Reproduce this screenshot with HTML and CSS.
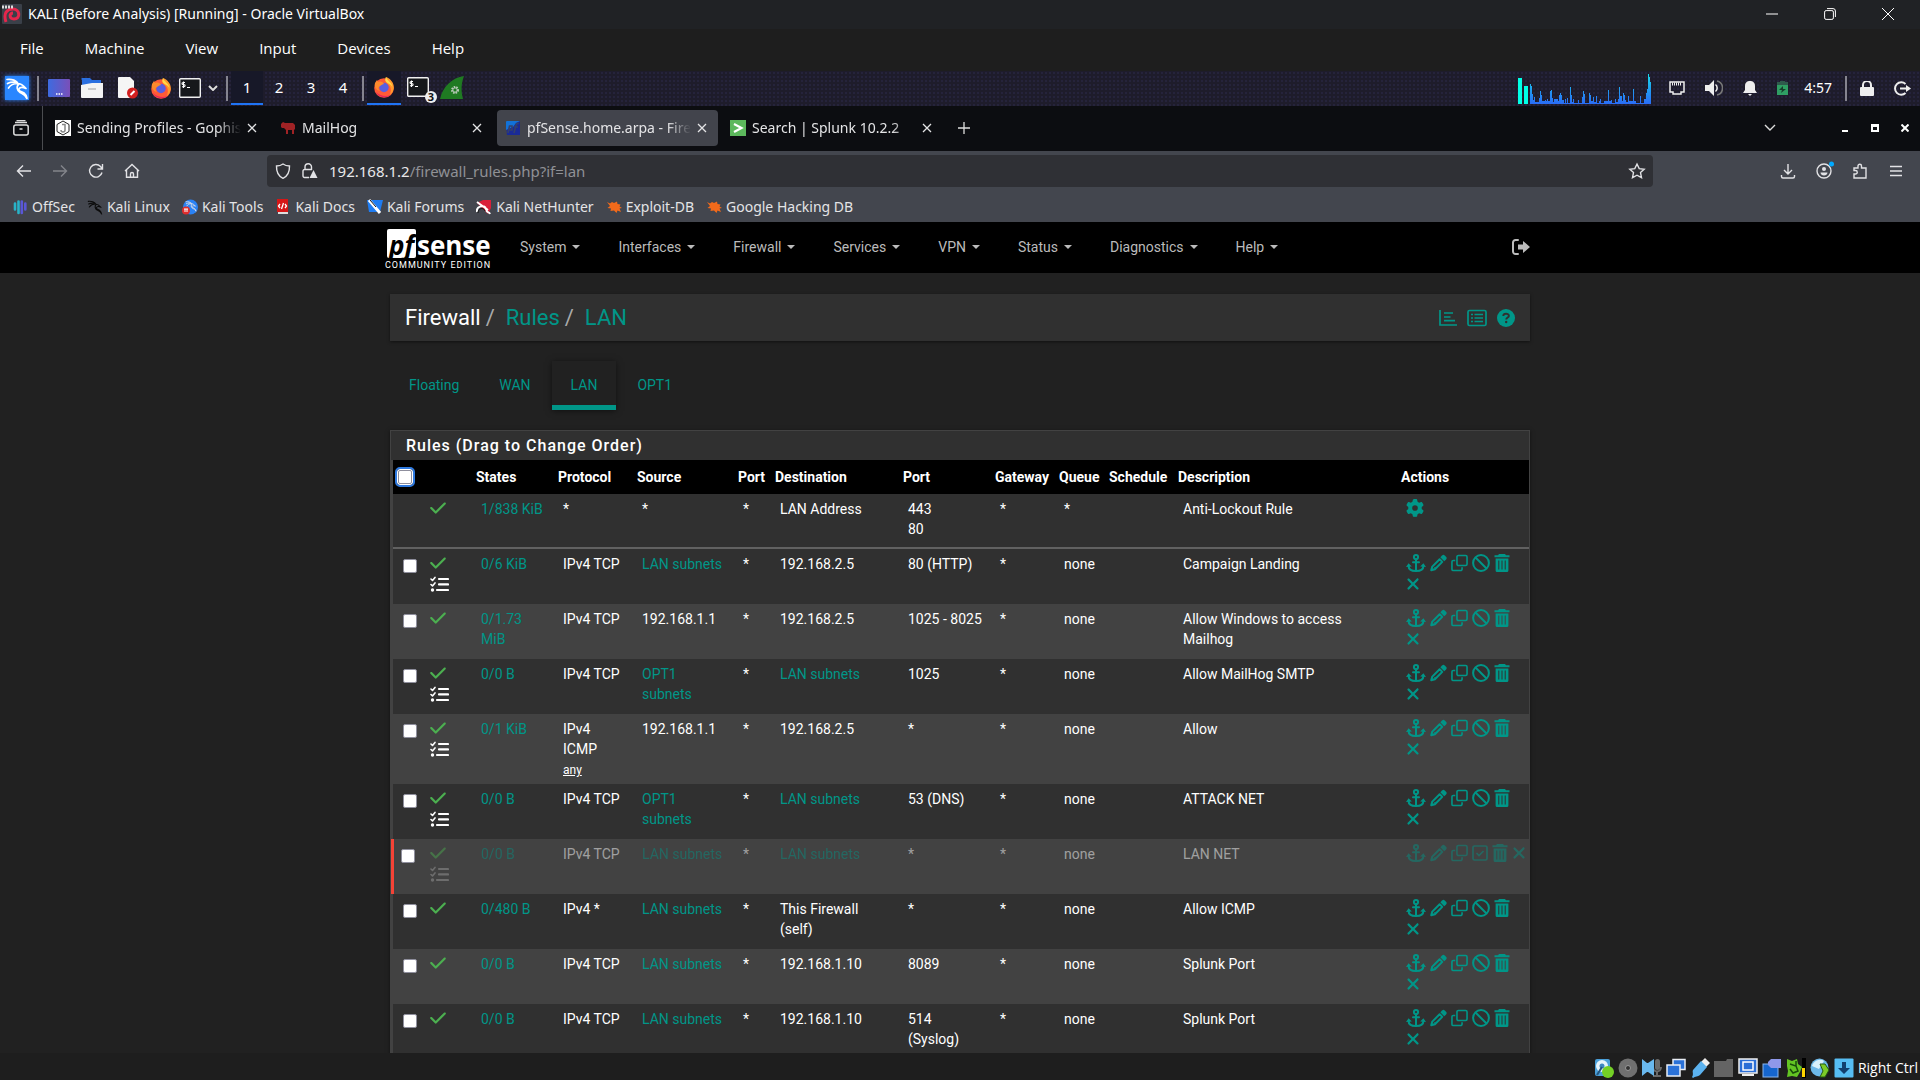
FILE: index.html
```html
<!DOCTYPE html>
<html lang="en">
<head>
<meta charset="utf-8">
<title>pfSense.home.arpa - Firewall: Rules: LAN</title>
<link rel="stylesheet" href="styles.css">
</head>
<body>
<svg class="sprite" aria-hidden="true">
  <symbol id="check" viewBox="0 0 448 512"><path fill="currentColor" d="M438.6 105.4c12.5 12.5 12.5 32.8 0 45.3l-256 256c-12.5 12.5-32.8 12.5-45.3 0l-128-128c-12.5-12.5-12.5-32.8 0-45.3s32.8-12.5 45.3 0L160 338.7 393.4 105.4c12.5-12.5 32.8-12.5 45.3 0z"/></symbol>
  <symbol id="xmark" viewBox="0 0 384 512"><path fill="currentColor" d="M342.6 150.6c12.5-12.5 12.5-32.8 0-45.3s-32.8-12.5-45.3 0L192 210.7 86.6 105.4c-12.5-12.5-32.8-12.5-45.3 0s-12.5 32.8 0 45.3L146.7 256 41.4 361.4c-12.5 12.5-12.5 32.8 0 45.3s32.8 12.5 45.3 0L192 301.3 297.4 406.6c12.5 12.5 32.8 12.5 45.3 0s12.5-32.8 0-45.3L237.3 256 342.6 150.6z"/></symbol>
  <symbol id="gear" viewBox="0 0 512 512"><path fill="currentColor" d="M495.9 166.6c3.2 8.7 .5 18.4-6.4 24.6l-43.3 39.4c1.1 8.3 1.7 16.8 1.7 25.4s-.6 17.1-1.7 25.4l43.3 39.4c6.9 6.2 9.6 15.9 6.4 24.6c-4.4 11.9-9.7 23.3-15.8 34.3l-4.7 8.1c-6.6 11-14 21.4-22.1 31.2c-5.9 7.2-15.7 9.6-24.5 6.8l-55.7-17.7c-13.4 10.3-28.2 18.9-44 25.4l-12.5 57.1c-2 9.1-9 16.3-18.2 17.8c-13.8 2.3-28 3.5-42.5 3.5s-28.7-1.2-42.5-3.5c-9.2-1.5-16.2-8.7-18.2-17.8l-12.5-57.1c-15.8-6.5-30.6-15.1-44-25.4L83.1 425.9c-8.8 2.8-18.6 .3-24.5-6.8c-8.1-9.8-15.5-20.2-22.1-31.2l-4.7-8.1c-6.1-11-11.4-22.4-15.8-34.3c-3.2-8.7-.5-18.4 6.4-24.6l43.3-39.4C64.6 273.1 64 264.6 64 256s.6-17.1 1.7-25.4L22.4 191.2c-6.9-6.2-9.6-15.9-6.4-24.6c4.4-11.9 9.7-23.3 15.8-34.3l4.7-8.1c6.6-11 14-21.4 22.1-31.2c5.9-7.2 15.7-9.6 24.5-6.8l55.7 17.7c13.4-10.3 28.2-18.9 44-25.4l12.5-57.1c2-9.1 9-16.3 18.2-17.8C227.3 1.2 241.5 0 256 0s28.7 1.2 42.5 3.5c9.2 1.5 16.2 8.7 18.2 17.8l12.5 57.1c15.8 6.5 30.6 15.1 44 25.4l55.7-17.7c8.8-2.8 18.6-.3 24.5 6.8c8.1 9.8 15.5 20.2 22.1 31.2l4.7 8.1c6.1 11 11.4 22.4 15.8 34.3zM256 336a80 80 0 1 0 0-160 80 80 0 1 0 0 160z"/></symbol>
  <symbol id="tasks" viewBox="0 0 19 18"><g fill="none" stroke="currentColor" stroke-linecap="round" stroke-linejoin="round"><path stroke-width="1.6" d="M1 4l1.5 1.4L5 2.4M1 9.5l1.5 1.4L5 7.9"/><path stroke-width="2.2" d="M9 4h9M9 9.4h9M7 15h11"/></g><circle cx="2.5" cy="15" r="1.7" fill="currentColor"/></symbol>
  <symbol id="anchor" viewBox="0 0 20 18"><g fill="none" stroke="currentColor" stroke-width="2" stroke-linecap="round"><circle cx="10" cy="3.1" r="2.1"/><path d="M10 5.5V16.5M7 8.2h6M2.6 12c0 3.4 3 5 7.4 5s7.4-1.6 7.4-5"/></g><path fill="currentColor" d="M0 12.9l2.6-3.7 3.2 3.4zM20 12.9l-2.6-3.7-3.2 3.4z"/></symbol>
  <symbol id="pencil" viewBox="0 0 18 18"><path fill="currentColor" d="M12.8 1a2 2 0 0 1 2.8 0L17 2.4a2 2 0 0 1 0 2.8l-1.9 1.9L10.9 2.9z"/><path fill="none" stroke="currentColor" stroke-width="2.1" stroke-linejoin="round" d="M10.2 5l2.8 2.8-7.8 7.8-3.9 1.1 1.1-3.9z"/><path stroke="currentColor" d="M4 14.5l2-1"/></symbol>
  <symbol id="clone" viewBox="0 0 18 18"><g fill="none" stroke="currentColor" stroke-width="1.7"><rect x="6.3" y="1" width="10.7" height="10.7" rx="1.6"/><path d="M4.5 6.3H2.5A1.5 1.5 0 0 0 1 7.8V15.5A1.5 1.5 0 0 0 2.5 17H10.2a1.5 1.5 0 0 0 1.5-1.5V13.5"/></g></symbol>
  <symbol id="ban" viewBox="0 0 18 18"><g fill="none" stroke="currentColor" stroke-width="2"><circle cx="9" cy="9" r="7.9"/><path d="M3.5 3.5l11 11"/></g></symbol>
  <symbol id="trash" viewBox="0 0 16 18"><path fill="currentColor" fill-rule="evenodd" d="M5 0h6l1 1.2h3.5v2H.5v-2H4zM1.600 4.500h12.800v12a1.500 1.500 0 0 1-1.500 1.500H3.100a1.500 1.500 0 0 1-1.500-1.500zM4.300 6.500v9h1v-9zM7.500 6.500v9h1v-9zM10.700 6.500v9h1v-9z"/></symbol>
  <symbol id="square-check" viewBox="0 0 16 18"><g fill="none" stroke="currentColor" stroke-width="1.7"><rect x="1" y="2" width="14" height="14" rx="1.5"/><path d="M4.500 9l2.500 2.500L11.500 7"/></g></symbol>
  <symbol id="close" viewBox="0 0 10 10"><path fill="none" stroke="currentColor" stroke-width="1.3" d="M1 1l8 8M9 1L1 9"/></symbol>
  <symbol id="firefox" viewBox="0 0 22 22"><circle cx="11" cy="12" r="9.8" fill="#ff5a36"/><path fill="#ff9a2b" d="M13 1c5 2 8 6 7.800 11a10 10 0 0 1-4 7c2-5 1-8-1-10s-4-4-2.800-8z"/><path fill="#ffd84a" d="M13 1c1 4 6 5 6.500 10-2-3-3-3-5-4S11.500 4 13 1z"/><circle cx="11" cy="11.5" r="4.7" fill="#5a5fe0"/><path fill="#ff8a2c" d="M2 7l2-3 1 2c3-1 5 0 6 2-2 0-2 1-4 2s-2 3 0 5c-4-1-6-4-5-8z"/><path fill="#e8255c" d="M2.500 16a10 10 0 0 0 15 3c-5 2-10 1-15-3z"/></symbol>
  <symbol id="terminal" viewBox="0 0 22 20"><rect x=".7" y=".7" width="20.6" height="18.6" rx="1" fill="#16181b" stroke="#f0f0f0" stroke-width="1.4"/><path fill="none" stroke="#fff" stroke-width="1.1" d="M6 4.500H4a1 1 0 0 0 0 2h1a1 1 0 0 1 0 2.200H3M4.500 3.500v6.500M8 9.500h3"/></symbol>
  <symbol id="dragon" viewBox="0 0 24 24"><path fill="none" stroke="currentColor" stroke-linecap="round" stroke-linejoin="round" stroke-width="1.7" d="M2 3.500c5-.5 8 .5 10.500 3M2.500 7.500c4-2 7-1.500 10-1 M3.500 12c2-3 5-4.500 9-4.500 4 0 6 2 8.500 5-3-1.500-6-1.500-7 .5s3 2.500 5 4 2.500 3 3 5.500c-2-4-4-4.500-7-6S11 10 14 8"/></symbol>
  <symbol id="spider" viewBox="0 0 16 16"><path fill="#f26a1b" d="M1 3l3 1.500L6 3l2 1 3-1.500L11.500 5l3 .5-1 2L16 9l-2.500.5L15 13l-3.500-1.500L10.500 14 8 11.500 4.500 12 5 9.500 1.500 9 4 7z"/></symbol>
</svg>

<header class="titlebar">
  <svg class="titlebar-logo" viewBox="0 0 20 20"><rect width="20" height="20" rx="1" fill="#3a4049"/><path fill="none" stroke="#e5264b" stroke-width="3" d="M4 18C1 9 5 5 11 5c7 0 8 10 1 10-5 0-5-6-1-6"/><path stroke="#ddd" stroke-width="3" stroke-dasharray="2 1" d="M0 3h11"/></svg>
  <span class="titlebar-text">KALI (Before Analysis) [Running] - Oracle VirtualBox</span>
  <div class="window-controls">
    <button aria-label="Minimize"><svg viewBox="0 0 12 12"><path d="M0 6h12"/></svg></button>
    <button aria-label="Restore"><svg viewBox="0 0 12 12"><rect x=".6" y="2.6" width="8.8" height="8.8" rx="1.5"/><path d="M3 .6h6a2.400 2.400 0 0 1 2.400 2.400v6"/></svg></button>
    <button aria-label="Close"><svg viewBox="0 0 12 12"><path d="M0 0l12 12M12 0L0 12"/></svg></button>
  </div>
</header>

<nav class="vm-menu" aria-label="Machine menu">
  <button>File</button><button>Machine</button><button>View</button><button>Input</button><button>Devices</button><button>Help</button>
</nav>

<section class="panel-bar" aria-label="Desktop panel">
  <button class="kali-button" aria-label="Applications"><svg viewBox="0 0 24 24"><use href="#dragon"/></svg></button>
  <span class="divider"></span>
  <div class="launchers">
    <svg width="22" height="18" viewBox="0 0 22 18"><defs><linearGradient id="desk"><stop stop-color="#3d6be0"/><stop offset="1" stop-color="#7a4fb8"/></linearGradient></defs><rect width="22" height="18" rx="1" fill="url(#desk)"/><path stroke="#fff" stroke-width="1.5" stroke-dasharray="1.5 1" d="M8 15h7"/></svg>
    <svg width="22" height="20" viewBox="0 0 22 20"><path fill="#2a6fe0" d="M1 2a1 1 0 0 1 1-2h7l2 2h9v6H1z"/><path fill="#f3f3f3" d="M0 7l11-2h11v14a1 1 0 0 1-1 1H1a1 1 0 0 1-1-1z"/><path stroke="#bbb" stroke-width="1.5" d="M7 11h8"/></svg>
    <svg class="editor" width="20" height="22" viewBox="0 0 20 22"><path fill="#f5f5f5" d="M0 1a1 1 0 0 1 1-1h11l4 4v16a1 1 0 0 1-1 1H1a1 1 0 0 1-1-1z"/><circle cx="14.5" cy="16" r="5.5" fill="#d21f1f"/><path stroke="#fff" stroke-width="2" d="M12.500 18l4-4"/></svg>
    <svg width="22" height="22"><use href="#firefox"/></svg>
    <svg class="shell" width="22" height="20"><use href="#terminal"/></svg>
  </div>
  <svg class="chevron" viewBox="0 0 10 6"><path d="M1 1l4 4 4-4"/></svg>
  <span class="divider"></span>
  <div class="workspaces">
    <button class="active">1</button><button>2</button><button>3</button><button>4</button>
  </div>
  <span class="divider"></span>
  <button class="task active" aria-label="Firefox"><svg width="22" height="22"><use href="#firefox"/></svg></button>
  <button class="task" aria-label="Terminals"><svg width="22" height="20"><use href="#terminal"/></svg><span class="badge">3</span></button>
  <button class="task" aria-label="Wireshark"><svg width="24" height="23" viewBox="0 0 24 23"><path fill="#1f7a22" d="M0 23C3 10 12 2 24 0c-3 8-3 15-1 23z"/><circle cx="15" cy="14" r="3" fill="none" stroke="#b9c9b9" stroke-width="2" stroke-dasharray="1.5 1"/><circle cx="15" cy="14" r="2.2" fill="none" stroke="#b9c9b9"/></svg></button>
  <div class="tray">
    <svg class="cpu-graph" width="141" height="31" viewBox="0 0 141 31"><defs><linearGradient id="cpu" gradientUnits="userSpaceOnUse" x1="0" y1="0" x2="0" y2="31"><stop stop-color="#18e0e8"/><stop offset=".6" stop-color="#2196f3"/><stop offset="1" stop-color="#2a6cf6"/></linearGradient></defs><path fill="#00ffe5" d="M0 5h4v26H0zM6 13h4v18H6z"/><path fill="url(#cpu)" d="M12 31V11h1v2h1v8h1v6h1v-3h1v5h4v-4h1v-7h1v4h1v6h3v-1h1v1h1v-2h1v2h2V18h1v-1h1v8h1v4h1v-3h4v2h1v-6h1v-2h1v2h1v5h2v3h1v-4h1v4h1v-5h1v5h2V14h1v8h1v7h1v-3h1v4h4v-3h1v3h3v-6h1v-6h1v3h1v9h4V20h1v2h1v6h2v-4h1v5h2v-6h1v7h2v-2h1v-2h1v4h3v-2h4V17h1v11h2v-1h1v3h3v-4h1v3h2v-3h1V14h1v9h2v5h1v-8h1v2h1v5h1v2h2v-6h1v5h4V16h1v12h2v2h4v-7h1v7h3v-4h2v-6h1v-4h1V1h1v3h1v5h1v22z"/></svg>
    <svg width="16" height="14" viewBox="0 0 16 14"><path fill="none" stroke="#eee" stroke-width="1.5" d="M1 1h14v10h-3v2H4v-2H1z"/><path stroke="#eee" stroke-dasharray="1 1" stroke-width="3" d="M3 3h10"/></svg>
    <svg width="18" height="16" viewBox="0 0 18 16"><path fill="#eee" d="M0 5h4l5-5v16l-5-5H0z"/><path fill="none" stroke="#eee" stroke-width="1.5" d="M10.500 4.500a4.500 4.500 0 0 1 0 7"/><path fill="none" stroke="#777" stroke-width="1.5" d="M12 1a7.200 7.200 0 0 1 0 14"/></svg>
    <svg width="14" height="16" viewBox="0 0 14 16"><path fill="#eee" d="M0 13l2-3V6a5 5 0 0 1 4-5h2a5 5 0 0 1 4 5v4l2 3zM5 14h4l-2 2z"/></svg>
    <svg width="12" height="14" viewBox="0 0 12 14"><path fill="#2f5a4c" d="M3 0h5v1h3v4H0V1h3z"/><path fill="#2f9e63" d="M0 4h11v10H0z"/><path fill="#173d2b" d="M6 5L2 9h3l-1 3 5-4H6z"/></svg>
    <span class="clock">4:57</span>
    <span class="divider"></span>
    <svg width="14" height="15" viewBox="0 0 14 15"><rect y="6" width="14" height="9" rx="1" fill="#eee"/><path fill="none" stroke="#eee" stroke-width="2" d="M3 7V4a4 4 0 0 1 8 0v3"/></svg>
    <svg width="17" height="15" viewBox="0 0 17 15"><path fill="none" stroke="#eee" stroke-width="2" d="M11.500 3a6.200 6.200 0 1 0 0 9M6 7.500h8"/><path fill="#eee" d="M12 4l5 3.500-5 3.500z"/></svg>
  </div>
</section>

<section class="tab-strip" aria-label="Browser tabs">
  <button class="view-button" aria-label="Firefox View"><svg viewBox="0 0 16 16"><rect x=".8" y="5" width="14.4" height="10" rx="2"/><path d="M2 2.500h12M3.500.6h9M6.500 9h3"/></svg></button>
  <div class="tabs">
    <div class="tab"><svg class="fav" viewBox="0 0 16 16"><rect width="16" height="16" fill="#fff"/><path fill="none" stroke="#222" d="M8 1l6 3.500v7L8 15l-6-3.500v-7z"/><path fill="none" stroke="#888" stroke-width="1.5" d="M7 4.500h3V10a2 2 0 0 1-4 0"/></svg><span class="tab-title">Sending Profiles - Gophish</span><button aria-label="Close tab"><svg><use href="#close"/></svg></button></div>
    <div class="tab"><svg class="fav" viewBox="0 0 16 16"><path fill="#a02225" d="M1 4l2-2 2 1h8l2 2v4l-1 1v4h-2v-4l-4 0v4H6v-4L4 8H2L1 7z"/></svg><span class="tab-title">MailHog</span><button aria-label="Close tab"><svg><use href="#close"/></svg></button></div>
    <div class="tab current"><svg class="fav" viewBox="0 0 16 16"><path fill="#1a2a96" d="M1 5l14-4v14H2z"/><path fill="#1272d8" d="M1 2a1 1 0 0 1 1-1h13l-4 2-3 4-7 3z"/><path fill="none" stroke="#34406c" stroke-width="1.6" d="M3 13l1.500-7h2.500v4H4.500M9 13l2-8q.5-2 3-1.500M9 7h4"/></svg><span class="tab-title">pfSense.home.arpa - Firewall</span><button aria-label="Close tab"><svg><use href="#close"/></svg></button></div>
    <div class="tab"><svg class="fav" viewBox="0 0 16 16"><rect width="16" height="16" fill="#5cb85c"/><path fill="none" stroke="#fff" stroke-width="2.2" d="M4 4l7.500 4L4 12"/></svg><span class="tab-title">Search | Splunk 10.2.2</span><button aria-label="Close tab"><svg><use href="#close"/></svg></button></div>
  </div>
  <button class="new-tab" aria-label="New tab"><svg viewBox="0 0 12 12"><path d="M6 0v12M0 6h12"/></svg></button>
  <div class="browser-controls">
    <svg class="list-tabs" viewBox="0 0 12 8"><path fill="none" stroke="#ddd" stroke-width="1.4" d="M1 1l5 5 5-5"/></svg>
    <button aria-label="Minimize"><svg viewBox="0 0 8 8"><path d="M1 7h6"/></svg></button>
    <button aria-label="Maximize"><svg viewBox="0 0 8 8"><path d="M1 1h6v6H1zM1 2h6"/></svg></button>
    <button aria-label="Close"><svg viewBox="0 0 8 8"><path d="M.5.5l7 7M7.500.5l-7 7"/></svg></button>
  </div>
</section>

<section class="toolbar" aria-label="Navigation">
  <div class="nav-buttons">
    <button aria-label="Back"><svg viewBox="0 0 16 16"><path d="M15 8H1.500M7 2.500L1.500 8 7 13.500"/></svg></button>
    <button aria-label="Forward" disabled><svg viewBox="0 0 16 16"><path d="M1 8h13.500M9 2.500L14.500 8 9 13.500"/></svg></button>
    <button aria-label="Reload"><svg viewBox="0 0 16 16"><path d="M14 9.500A6.300 6.300 0 1 1 12.500 3.500L14.500 6M14.500 1v5h-5"/></svg></button>
    <button aria-label="Home"><svg viewBox="0 0 16 16"><path d="M1 8l7-6.500L15 8M2.500 7v7.200h11V7M6.500 14v-3a1.500 1.500 0 0 1 3 0v3"/></svg></button>
  </div>
  <div class="url-bar">
    <svg viewBox="0 0 16 16"><path d="M8 1c2 1.500 4 2 6.500 2 .2 6-1.500 10-6.500 12.300C3 13 1.300 9 1.500 3 4 3 6 2.500 8 1z"/></svg>
    <svg viewBox="0 0 16 16"><path d="M7 14.500H2.500A1.500 1.500 0 0 1 1 13V8a1.500 1.500 0 0 1 1.500-1.500H10M3 6.500V4a3 3 0 0 1 6.500 0v3"/><path class="solid" d="M11.500 7l4 8h-8z"/></svg>
    <a class="url" href="#">192.168.1.2<span>/firewall_rules.php?if=lan</span></a>
    <svg viewBox="0 0 16 16"><path d="M8 1l2.200 4.600 5 .6-3.700 3.400 1 5L8 12.200 3.500 14.600l1-5L.8 6.200l5-.6z"/></svg>
  </div>
  <div class="tool-buttons">
    <button aria-label="Downloads"><svg viewBox="0 0 16 16"><path d="M8 1v9.500M4 7l4 4 4-4M1.500 12v1.500a1.500 1.500 0 0 0 1.500 1.500h10a1.500 1.500 0 0 0 1.500-1.500V12"/></svg></button>
    <button aria-label="Account"><svg viewBox="0 0 16 16"><circle cx="8" cy="8" r="7"/><circle class="solid" cx="8" cy="6" r="2"/><path class="solid" d="M4.500 9.500h7c0 4-7 4-7 0z"/><circle cx="15.5" cy="1" r="2.5" class="dot"/></svg></button>
    <button aria-label="Extensions"><svg viewBox="0 0 16 16"><path d="M2 15V11h1.500a1.700 1.700 0 0 0 0-3.500H2V5h4V3a1.700 1.700 0 0 1 3.500 0v2H14v10z"/></svg></button>
    <button aria-label="Menu"><svg viewBox="0 0 16 16"><path d="M2 3.500h12M2 8h12M2 12.500h12"/></svg></button>
  </div>
</section>

<nav class="bookmarks" aria-label="Bookmarks">
  <a href="#"><svg viewBox="0 0 16 16"><g fill="none" stroke-width="2.6" stroke-linecap="round"><path stroke="#28b3c8" d="M6.500 2.500v11.500M3 4.500v6"/><path stroke="#5a57d6" d="M9.800 2.500v11.500M13.300 4.500v6"/></g></svg>OffSec</a>
  <a href="#" class="dark-mark"><svg viewBox="0 0 24 24"><use href="#dragon"/></svg>Kali Linux</a>
  <a href="#"><svg viewBox="0 0 16 16"><circle cx="8.500" cy="8" r="7.500" fill="#2a82f5"/><use href="#dragon" x="3" y="1" width="12" height="12"/><circle cx="4" cy="11.500" r="4" fill="#e02d2d"/><path stroke="#fff" d="M2 10h4M3 10v3M5 10v3"/></svg>Kali Tools</a>
  <a href="#"><svg viewBox="0 0 16 16"><path fill="#d61616" d="M2 0h11v13H2z"/><path fill="#ddd" d="M3 13h10v2H3z"/><path fill="none" stroke="#fff" stroke-width="1.3" d="M5 5L3.500 7 5 9M10 5l1.500 2L10 9M8.500 4l-2 6"/></svg>Kali Docs</a>
  <a href="#"><svg viewBox="0 0 16 16"><path fill="#1e7cf2" d="M0 1h16l-3 12H2z"/><path stroke="#fff" stroke-width="3" d="M2 1l11 13"/><path stroke="#111" d="M3 1l6 7"/></svg>Kali Forums</a>
  <a href="#"><svg viewBox="0 0 16 16"><path fill="#d9203a" d="M1 4l6-3h8v8l-3 6z"/><path fill="none" stroke="#fff" stroke-width="2" d="M1 13c-1-6 8-8 9-3s3 2 4 5M1 3l11 8"/><path fill="none" stroke="#111" d="M2 14c0-5 6-6 7-2"/></svg>Kali NetHunter</a>
  <a href="#"><svg><use href="#spider"/></svg>Exploit-DB</a>
  <a href="#"><svg><use href="#spider"/></svg>Google Hacking DB</a>
</nav>

<main class="page">
  <nav class="site-nav" aria-label="Site">
    <div class="site-nav-inner">
      <a class="brand" href="#">
        <span class="brand-top"><span class="brand-pf">pf</span><span class="brand-sense">sense</span></span>
        <span class="brand-edition">COMMUNITY EDITION</span>
      </a>
      <ul>
        <li><a href="#">System<i></i></a></li><li><a href="#">Interfaces<i></i></a></li><li><a href="#">Firewall<i></i></a></li><li><a href="#">Services<i></i></a></li><li><a href="#">VPN<i></i></a></li><li><a href="#">Status<i></i></a></li><li><a href="#">Diagnostics<i></i></a></li><li><a href="#">Help<i></i></a></li>
      </ul>
      <a class="logout" href="#" aria-label="Log out"><svg viewBox="0 0 18 16"><path fill="none" stroke="currentColor" stroke-width="2" stroke-linecap="round" d="M6 1H3.500A2.500 2.500 0 0 0 1 3.500v9A2.500 2.500 0 0 0 3.500 15H6"/><path fill="currentColor" d="M6 5.500h5V2l7 6-7 6v-3.500H6z"/></svg></a>
    </div>
  </nav>

  <div class="container">
    <header class="crumbs">
      <h1><span>Firewall</span><b>/</b><a href="#">Rules</a><b>/</b><a href="#">LAN</a></h1>
      <div class="crumb-icons">
        <a href="#" aria-label="Status"><svg width="18" height="18" viewBox="0 0 18 18"><path fill="none" stroke="currentColor" stroke-width="1.7" d="M1 1v15h17M5 4h9M5 8h6.500M5 11.700h11"/></svg></a>
        <a href="#" aria-label="Logs"><svg width="20" height="18" viewBox="0 0 20 18"><g fill="none" stroke="currentColor" stroke-width="1.7"><rect x="1" y="1.5" width="18" height="15" rx="1.5"/><path d="M4 5.500h2M7.500 5.500H16M4 9h2M7.500 9H16M4 12.500h2M7.500 12.500H16"/></g></svg></a>
        <a href="#" aria-label="Help"><svg width="18" height="18" viewBox="0 0 18 18"><circle cx="9" cy="9" r="9" fill="currentColor"/><path fill="none" stroke="#303030" stroke-width="1.9" d="M6.300 7c0-3 5.600-3 5.600 0 0 1.500-2.700 1.700-2.700 3.600"/><circle cx="9.200" cy="13" r="1.2" fill="#303030"/></svg></a>
      </div>
    </header>

    <ul class="iface-tabs">
      <li><a href="#">Floating</a></li><li><a href="#">WAN</a></li><li><a class="selected" href="#">LAN</a></li><li><a href="#">OPT1</a></li>
    </ul>

    <section class="rules">
      <h2>Rules (Drag to Change Order)</h2>
      <div class="rules-body">
        <table>
          <colgroup><col class="c-sel"><col class="c-icon"><col class="c-states"><col class="c-proto"><col class="c-src"><col class="c-sport"><col class="c-dst"><col class="c-dport"><col class="c-gw"><col class="c-queue"><col class="c-sched"><col><col class="c-act"></colgroup>
          <thead>
            <tr><th><input type="checkbox" class="select-all" aria-label="Select all"></th><th></th><th>States</th><th>Protocol</th><th>Source</th><th>Port</th><th>Destination</th><th>Port</th><th>Gateway</th><th>Queue</th><th>Schedule</th><th>Description</th><th>Actions</th></tr>
          </thead>
          <tbody>
            <tr class="lockout"><td></td><td><svg class="pass"><use href="#check"/></svg></td><td><a href="#">1/838 KiB</a></td><td>*</td><td>*</td><td>*</td><td>LAN Address</td><td>443<br>80</td><td>*</td><td>*</td><td></td><td>Anti-Lockout Rule</td><td><div class="actions"><a href="#" aria-label="Settings"><svg class="w18"><use href="#gear"/></svg></a></div></td></tr>
            <tr><td><input type="checkbox" aria-label="Select Campaign Landing"></td><td><svg class="pass"><use href="#check"/></svg><svg class="adv"><use href="#tasks"/></svg></td><td><a href="#">0/6 KiB</a></td><td>IPv4 TCP</td><td><a href="#">LAN subnets</a></td><td>*</td><td>192.168.2.5</td><td>80 (HTTP)</td><td>*</td><td>none</td><td></td><td>Campaign Landing</td><td><div class="actions"><a href="#" aria-label="Move"><svg class="w20"><use href="#anchor"/></svg></a><a href="#" aria-label="Edit"><svg class="w17"><use href="#pencil"/></svg></a><a href="#" aria-label="Copy"><svg class="w17"><use href="#clone"/></svg></a><a href="#" aria-label="Disable"><svg class="w18"><use href="#ban"/></svg></a><a href="#" aria-label="Delete"><svg class="w16"><use href="#trash"/></svg></a><a href="#" aria-label="Kill states"><svg class="w14"><use href="#xmark"/></svg></a></div></td></tr>
            <tr><td><input type="checkbox" aria-label="Select Allow Windows to access Mailhog"></td><td><svg class="pass"><use href="#check"/></svg></td><td><a href="#">0/1.73 MiB</a></td><td>IPv4 TCP</td><td>192.168.1.1</td><td>*</td><td>192.168.2.5</td><td>1025 - 8025</td><td>*</td><td>none</td><td></td><td>Allow Windows to access Mailhog</td><td><div class="actions"><a href="#" aria-label="Move"><svg class="w20"><use href="#anchor"/></svg></a><a href="#" aria-label="Edit"><svg class="w17"><use href="#pencil"/></svg></a><a href="#" aria-label="Copy"><svg class="w17"><use href="#clone"/></svg></a><a href="#" aria-label="Disable"><svg class="w18"><use href="#ban"/></svg></a><a href="#" aria-label="Delete"><svg class="w16"><use href="#trash"/></svg></a><a href="#" aria-label="Kill states"><svg class="w14"><use href="#xmark"/></svg></a></div></td></tr>
            <tr><td><input type="checkbox" aria-label="Select Allow MailHog SMTP"></td><td><svg class="pass"><use href="#check"/></svg><svg class="adv"><use href="#tasks"/></svg></td><td><a href="#">0/0 B</a></td><td>IPv4 TCP</td><td><a href="#">OPT1<br>subnets</a></td><td>*</td><td><a href="#">LAN subnets</a></td><td>1025</td><td>*</td><td>none</td><td></td><td>Allow MailHog SMTP</td><td><div class="actions"><a href="#" aria-label="Move"><svg class="w20"><use href="#anchor"/></svg></a><a href="#" aria-label="Edit"><svg class="w17"><use href="#pencil"/></svg></a><a href="#" aria-label="Copy"><svg class="w17"><use href="#clone"/></svg></a><a href="#" aria-label="Disable"><svg class="w18"><use href="#ban"/></svg></a><a href="#" aria-label="Delete"><svg class="w16"><use href="#trash"/></svg></a><a href="#" aria-label="Kill states"><svg class="w14"><use href="#xmark"/></svg></a></div></td></tr>
            <tr><td><input type="checkbox" aria-label="Select Allow"></td><td><svg class="pass"><use href="#check"/></svg><svg class="adv"><use href="#tasks"/></svg></td><td><a href="#">0/1 KiB</a></td><td>IPv4<br>ICMP<br><u>any</u></td><td>192.168.1.1</td><td>*</td><td>192.168.2.5</td><td>*</td><td>*</td><td>none</td><td></td><td>Allow</td><td><div class="actions"><a href="#" aria-label="Move"><svg class="w20"><use href="#anchor"/></svg></a><a href="#" aria-label="Edit"><svg class="w17"><use href="#pencil"/></svg></a><a href="#" aria-label="Copy"><svg class="w17"><use href="#clone"/></svg></a><a href="#" aria-label="Disable"><svg class="w18"><use href="#ban"/></svg></a><a href="#" aria-label="Delete"><svg class="w16"><use href="#trash"/></svg></a><a href="#" aria-label="Kill states"><svg class="w14"><use href="#xmark"/></svg></a></div></td></tr>
            <tr><td><input type="checkbox" aria-label="Select ATTACK NET"></td><td><svg class="pass"><use href="#check"/></svg><svg class="adv"><use href="#tasks"/></svg></td><td><a href="#">0/0 B</a></td><td>IPv4 TCP</td><td><a href="#">OPT1<br>subnets</a></td><td>*</td><td><a href="#">LAN subnets</a></td><td>53 (DNS)</td><td>*</td><td>none</td><td></td><td>ATTACK NET</td><td><div class="actions"><a href="#" aria-label="Move"><svg class="w20"><use href="#anchor"/></svg></a><a href="#" aria-label="Edit"><svg class="w17"><use href="#pencil"/></svg></a><a href="#" aria-label="Copy"><svg class="w17"><use href="#clone"/></svg></a><a href="#" aria-label="Disable"><svg class="w18"><use href="#ban"/></svg></a><a href="#" aria-label="Delete"><svg class="w16"><use href="#trash"/></svg></a><a href="#" aria-label="Kill states"><svg class="w14"><use href="#xmark"/></svg></a></div></td></tr>
            <tr class="disabled"><td><input type="checkbox" aria-label="Select LAN NET"></td><td><svg class="pass"><use href="#check"/></svg><svg class="adv"><use href="#tasks"/></svg></td><td><a href="#">0/0 B</a></td><td><span>IPv4 TCP</span></td><td><a href="#">LAN subnets</a></td><td><span>*</span></td><td><a href="#">LAN subnets</a></td><td><span>*</span></td><td><span>*</span></td><td>none</td><td></td><td><span>LAN NET</span></td><td><div class="actions"><a href="#" aria-label="Move"><svg class="w20"><use href="#anchor"/></svg></a><a href="#" aria-label="Edit"><svg class="w17"><use href="#pencil"/></svg></a><a href="#" aria-label="Copy"><svg class="w17"><use href="#clone"/></svg></a><a href="#" aria-label="Enable"><svg class="w16"><use href="#square-check"/></svg></a><a href="#" aria-label="Delete"><svg class="w16"><use href="#trash"/></svg></a><a href="#" aria-label="Kill states"><svg class="w14"><use href="#xmark"/></svg></a></div></td></tr>
            <tr><td><input type="checkbox" aria-label="Select Allow ICMP"></td><td><svg class="pass"><use href="#check"/></svg></td><td><a href="#">0/480 B</a></td><td>IPv4 *</td><td><a href="#">LAN subnets</a></td><td>*</td><td>This Firewall<br>(self)</td><td>*</td><td>*</td><td>none</td><td></td><td>Allow ICMP</td><td><div class="actions"><a href="#" aria-label="Move"><svg class="w20"><use href="#anchor"/></svg></a><a href="#" aria-label="Edit"><svg class="w17"><use href="#pencil"/></svg></a><a href="#" aria-label="Copy"><svg class="w17"><use href="#clone"/></svg></a><a href="#" aria-label="Disable"><svg class="w18"><use href="#ban"/></svg></a><a href="#" aria-label="Delete"><svg class="w16"><use href="#trash"/></svg></a><a href="#" aria-label="Kill states"><svg class="w14"><use href="#xmark"/></svg></a></div></td></tr>
            <tr><td><input type="checkbox" aria-label="Select Splunk Port 8089"></td><td><svg class="pass"><use href="#check"/></svg></td><td><a href="#">0/0 B</a></td><td>IPv4 TCP</td><td><a href="#">LAN subnets</a></td><td>*</td><td>192.168.1.10</td><td>8089</td><td>*</td><td>none</td><td></td><td>Splunk Port</td><td><div class="actions"><a href="#" aria-label="Move"><svg class="w20"><use href="#anchor"/></svg></a><a href="#" aria-label="Edit"><svg class="w17"><use href="#pencil"/></svg></a><a href="#" aria-label="Copy"><svg class="w17"><use href="#clone"/></svg></a><a href="#" aria-label="Disable"><svg class="w18"><use href="#ban"/></svg></a><a href="#" aria-label="Delete"><svg class="w16"><use href="#trash"/></svg></a><a href="#" aria-label="Kill states"><svg class="w14"><use href="#xmark"/></svg></a></div></td></tr>
            <tr><td><input type="checkbox" aria-label="Select Splunk Port 514"></td><td><svg class="pass"><use href="#check"/></svg></td><td><a href="#">0/0 B</a></td><td>IPv4 TCP</td><td><a href="#">LAN subnets</a></td><td>*</td><td>192.168.1.10</td><td>514<br>(Syslog)</td><td>*</td><td>none</td><td></td><td>Splunk Port</td><td><div class="actions"><a href="#" aria-label="Move"><svg class="w20"><use href="#anchor"/></svg></a><a href="#" aria-label="Edit"><svg class="w17"><use href="#pencil"/></svg></a><a href="#" aria-label="Copy"><svg class="w17"><use href="#clone"/></svg></a><a href="#" aria-label="Disable"><svg class="w18"><use href="#ban"/></svg></a><a href="#" aria-label="Delete"><svg class="w16"><use href="#trash"/></svg></a><a href="#" aria-label="Kill states"><svg class="w14"><use href="#xmark"/></svg></a></div></td></tr>
          </tbody>
        </table>
      </div>
    </section>
  </div>
</main>

<footer class="vm-status">
  <svg viewBox="0 0 20 20"><rect x="1" y="1" width="15" height="17" rx="2" fill="#4a9fd8"/><circle cx="8" cy="8" r="6" fill="#e6f4fb"/><circle cx="8" cy="8" r="2.5" fill="#3c88c2"/><path stroke="#24567f" stroke-width="2" d="M3 17l5-8"/><circle cx="14" cy="14" r="6" fill="#74d026"/></svg>
  <svg viewBox="0 0 20 20"><circle cx="10" cy="10" r="9.5" fill="#707070"/><circle cx="10" cy="10" r="2.5" fill="#333" stroke="#999"/></svg>
  <svg viewBox="0 0 20 20"><rect x="13" y="1" width="5" height="11" rx="2.5" fill="#6b6b6b"/><path fill="none" stroke="#6b6b6b" stroke-width="2" d="M11 9c0 6 8 6 8 0M15 14v4M11 18h8"/><path fill="#69b8ee" d="M0 1l5 4h1l6-4v17l-6-4H5l-5 4z"/></svg>
  <svg viewBox="0 0 20 20"><g fill="#2a72d8" stroke="#e9eef5" stroke-width="1.5"><rect x="7" y="1.5" width="12" height="10"/><rect x="1" y="7" width="13" height="11"/></g></svg>
  <svg viewBox="0 0 20 20"><path fill="#eee" d="M11 4l4-4 5 5-4 4z"/><path fill="#5bb2ef" d="M3 12l8-9 6 6-7 8c-2 2-5 1-7 3l-1-1c2-3 0-5 1-7z"/></svg>
  <svg viewBox="0 0 20 20"><path fill="#646464" d="M0 3h12l1-2h6v18H0z"/></svg>
  <svg viewBox="0 0 20 20"><rect x="1" y="1" width="18" height="14" fill="#2c6fd6" stroke="#f1f1f1" stroke-width="1.5"/><rect x="5" y="4" width="10" height="8" fill="none" stroke="#fff" stroke-width="1.5"/><path fill="#eee" d="M4 16h12v2H4z"/></svg>
  <svg viewBox="0 0 20 20"><rect x="1" y="6" width="15" height="13" fill="#1666ce" stroke="#88b6ef"/><path fill="#8f98ea" d="M9 1h10v9H9L6 7V4z"/></svg>
  <svg viewBox="0 0 20 20"><path fill="#63c523" d="M1 1l5 2 5-2 1 5 4 3-2 5-3 5-5-1-5 1 1-6-1-5z"/><path fill="none" stroke="#174c0b" stroke-width="1.5" d="M4 6l6 2 2 5-5 2-3-4M10 3v5"/><rect x="16" width="4" height="20" fill="#000"/><rect x="16" y="10" width="3" height="9" fill="#ffd400"/></svg>
  <svg viewBox="0 0 20 20"><circle cx="9.5" cy="9.5" r="9" fill="#6db8e8"/><path fill="#d9f0fb" d="M2 8a8 8 0 0 1 12-5l-5 8z"/><path fill="#7ccc28" stroke="#245a10" d="M10 6h5l4 6-4 7h-5l3-6z"/></svg>
  <svg viewBox="0 0 20 20"><rect x=".5" y=".5" width="19" height="19" rx="1" fill="#56bdf3"/><path fill="#123f6e" d="M8 4h4v6h4l-6 6-6-6h4z"/></svg>
  <span>Right Ctrl</span>
</footer>
</body>
</html>
```
FILE: styles.css
```css
* { box-sizing: border-box; }

body {
  margin: 0;
  height: 100vh;
  display: flex;
  flex-direction: column;
  overflow: hidden;
  background: #1e1e1e;
  color: #fff;
  font: 16px/20px "Noto Sans", sans-serif;
}

button {
  border: 0;
  padding: 0;
  background: none;
  color: inherit;
  font: inherit;
}

a { color: inherit; text-decoration: none; }
ul { list-style: none; margin: 0; padding: 0; }
svg { display: block; flex: none; }
.sprite { position: absolute; width: 0; height: 0; }

/* Host window */
.titlebar {
  display: flex;
  flex: none;
  align-items: center;
  height: 29px;
  padding: 0 0 2px 2px;
  gap: 6px;
  background: #202225;
  font-size: 14px;
}
.titlebar-logo { width: 20px; height: 20px; }
.window-controls { display: flex; gap: 10px; margin-left: auto; padding-right: 8px; }
.window-controls button { width: 48px; height: 27px; display: grid; place-items: center; }
.window-controls svg { width: 12px; height: 12px; fill: none; stroke: #fff; overflow: visible; }

.vm-menu {
  display: flex;
  flex: none;
  align-items: center;
  height: 42px;
  padding: 0 20px 4px;
  gap: 41px;
  background: #1e1e1e;
  font: 15px/20px "Open Sans", "Noto Sans", sans-serif;
}

/* Guest desktop panel */
.panel-bar {
  display: flex;
  flex: none;
  align-items: center;
  height: 35px;
  padding: 0 9px 1px 5px;
  background: radial-gradient(#25233b 1px, transparent 1px) 0 0 / 4px 4px #1e1c2b;
}
.kali-button { width: 24px; height: 24px; background: #2a86ff; box-shadow: 0 0 4px #2a86ff; color: #fff; }
.divider { width: 2px; height: 25px; background: #85848f; }
.kali-button + .divider { margin: 0 9px 0 8px; }
.launchers { display: flex; align-items: center; gap: 11px; }
.launchers .editor { margin: 0 1px 0 4px; }
.launchers .shell { margin-left: -4px; }
.chevron { width: 10px; height: 6px; margin: 0 8px 0 7px; fill: none; stroke: #ddd; stroke-width: 2; }
.workspaces { display: flex; align-self: stretch; margin: 0 3px; font-size: 15px; }
.workspaces button { width: 32px; border-bottom: 2px solid transparent; }
.workspaces .active, .task.active { background: #171828; border-bottom: 2px solid #1f74f5; }
.workspaces + .divider { margin-right: 3px; }
.task { position: relative; align-self: stretch; width: 34px; display: grid; place-items: center; border-bottom: 2px solid transparent; }
.badge {
  position: absolute;
  right: -2px;
  bottom: 0;
  width: 12px;
  height: 12px;
  border-radius: 6px;
  background: #eee;
  color: #111;
  font: bold 11px/12px "Noto Sans", sans-serif;
}
.tray { display: flex; align-items: center; gap: 20px; margin-left: auto; }
.cpu-graph { align-self: flex-end; margin-right: -10px; }
.clock { margin-left: -5px; font-size: 14px; }
.tray .divider { margin: 0 -7px; }

/* Browser */
.tab-strip {
  display: flex;
  flex: none;
  align-items: center;
  height: 45px;
  padding: 0 11px 1px 0;
  background: #0c0d11;
  color: #e4e4e6;
  font-size: 14px;
}
.view-button { width: 43px; height: 44px; display: grid; place-items: center; border-right: 1px solid #4b4c50; }
.view-button svg { width: 16px; height: 16px; fill: none; stroke: #ddd; stroke-width: 1.5; }
.tabs { display: flex; gap: 4px; margin-left: 4px; }
.tab { display: flex; align-items: center; gap: 6px; width: 221px; height: 36px; padding: 0 11px 0 8px; border-radius: 4px; }
.tab.current { background: #42444c; }
.fav { width: 16px; height: 16px; }
.tab-title {
  flex: 1;
  overflow: hidden;
  white-space: nowrap;
  -webkit-mask-image: linear-gradient(to left, transparent, #000 24px);
  mask-image: linear-gradient(to left, transparent, #000 24px);
}
.tab button svg { width: 10px; height: 10px; }
.new-tab { margin-left: 15px; }
.new-tab svg { width: 12px; height: 12px; stroke: #ddd; stroke-width: 1.3; }
.browser-controls { display: flex; align-items: center; gap: 22px; margin-left: auto; }
.browser-controls svg { width: 8px; height: 8px; fill: none; stroke: #fff; stroke-width: 2; }
.browser-controls .list-tabs { width: 12px; margin-right: 43px; }

.toolbar {
  display: flex;
  flex: none;
  align-items: center;
  height: 40px;
  padding: 0 16px;
  background: #43464e;
}
.toolbar svg { width: 16px; height: 16px; fill: none; stroke: #e2e2e5; stroke-width: 1.4; overflow: visible; }
.toolbar .solid { fill: #e2e2e5; stroke: none; }
.toolbar .dot { fill: #00aaff; stroke: none; }
.toolbar button:disabled { opacity: .4; }
.nav-buttons { display: flex; gap: 20px; }
.url-bar {
  display: flex;
  flex: 1;
  align-items: center;
  gap: 11px;
  height: 32px;
  margin: 0 127px;
  padding: 0 8px;
  border-radius: 4px;
  background: #2f3035;
  font-size: 15px;
  color: #e8e8ea;
}
.url { margin-right: auto; }
.url span { color: #909196; }
.tool-buttons { display: flex; gap: 20px; }

.bookmarks {
  display: flex;
  flex: none;
  align-items: center;
  gap: 12px;
  height: 31px;
  padding: 0 12px;
  background: #43464e;
  color: #e4e4e6;
  font-size: 14px;
}
.bookmarks a { display: flex; align-items: center; gap: 4px; }
.bookmarks svg { width: 16px; height: 16px; }
.bookmarks .dark-mark svg { color: #0c0c0c; }

/* pfSense page */
.page {
  flex: 1;
  min-height: 0;
  overflow: hidden;
  background: #212121;
  font: 14px/20px Roboto, sans-serif;
}
.site-nav { height: 51px; background: #000; color: #bbb; }
.site-nav-inner { display: flex; align-items: center; max-width: 1150px; height: 50px; margin: 0 auto; padding-right: 5px; }
.brand { align-self: flex-start; width: 106px; margin-right: 29px; padding-top: 7px; color: #fff; }
.brand-top { display: flex; height: 29px; padding-left: 2px; gap: 1px; font: bold 26px/33px "Open Sans", sans-serif; }
.brand-pf { width: 29px; height: 29px; border-radius: 2px; background: #fff; color: #000; font-style: italic; text-align: center; }
.brand-edition { display: block; margin-top: 2px; font-size: 9px; line-height: 10px; letter-spacing: 1px; white-space: nowrap; }
.site-nav ul { display: flex; gap: 38px; }
.site-nav li a { display: flex; align-items: center; gap: 6px; }
.site-nav i { border: 4px solid transparent; border-top-color: #bbb; border-bottom: 0; }
.logout { margin-left: auto; }
.logout svg { width: 18px; height: 16px; }

.container { max-width: 1140px; margin: 0 auto; }
.crumbs {
  display: flex;
  align-items: center;
  justify-content: space-between;
  height: 47px;
  margin-top: 21px;
  padding: 0 15px;
  background: #303030;
  box-shadow: 0 1px 3px rgba(0, 0, 0, .5);
}
h1 { display: flex; margin: 0; font-size: 22px; line-height: 28px; font-weight: 400; }
h1 b { margin: 0 11px 0 5px; color: #aaa; font-weight: 400; }
h1 a, .crumb-icons, .iface-tabs, td a { color: #009688; }
.crumb-icons { display: flex; gap: 10px; }

.iface-tabs { display: flex; gap: 2px; margin: 20px 0; }
.iface-tabs a { display: block; padding: 14px 19px 10px; border-bottom: 5px solid transparent; }
.iface-tabs .selected { border-bottom-color: #009688; box-shadow: 0 1px 6px rgba(0, 0, 0, .5); }

.rules { border: 1px solid #424242; border-bottom: 0; background: #303030; box-shadow: 0 1px 4px rgba(0, 0, 0, .5); }
h2 { margin: 0; height: 29px; padding: 0 15px; font-size: 16px; line-height: 29px; font-weight: 500; letter-spacing: 1px; }
.rules-body { padding-left: 2px; background: #424242; }
table { width: 100%; border-spacing: 0; table-layout: fixed; }
.c-sel { width: 27px; }
.c-icon { width: 51px; }
.c-states { width: 82px; }
.c-proto { width: 79px; }
.c-src { width: 101px; }
.c-sport { width: 37px; }
.c-dst { width: 128px; }
.c-dport { width: 92px; }
.c-gw { width: 64px; }
.c-queue { width: 50px; }
.c-sched { width: 69px; }
.c-act { width: 133px; }
th { height: 34px; padding: 0 0 0 5px; background: #000; text-align: left; font-weight: 700; }
td { height: 55px; padding: 5px 5px 5px 10px; vertical-align: top; }
td:last-child { padding-right: 2px; }
tbody tr { background: #303030; }
tbody tr:nth-child(odd) { background: #424242; }
tbody tr.lockout { background: #303030; }
.lockout td { border-bottom: 2px solid #616161; }
td u { font-size: 12px; line-height: 14px; }
input[type="checkbox"] {
  appearance: none;
  display: block;
  width: 14px;
  height: 14px;
  margin: 5px 0 0;
  border: 1px solid #8f8f9d;
  border-radius: 2px;
  background: #fff;
}
input.select-all { margin: 0; outline: 2px solid #2f7ae0; outline-offset: 1px; box-shadow: 0 0 0 1px #fff; }
.pass { width: 16px; height: 18px; margin-bottom: 3px; color: #4caf50; }
.adv { width: 19px; height: 18px; }
.actions { display: flex; flex-wrap: wrap; gap: 3px 4px; }
.actions svg { height: 18px; }
.w20 { width: 20px; }
.w18 { width: 18px; }
.w17 { width: 17px; }
.w16 { width: 16px; }
.w14 { width: 14px; }
.disabled td:first-child { padding-left: 8px; box-shadow: inset 1px 0 #f44336, -2px 0 #f44336; }
.disabled td { color: rgba(255, 255, 255, .5); }
.disabled svg, .disabled td > a { opacity: .45; }

/* Host status bar */
.vm-status {
  display: flex;
  flex: none;
  align-items: center;
  justify-content: flex-end;
  gap: 4px;
  height: 27px;
  padding: 3px 2px 0 0;
  background: #1e1e1e;
  font: 14px/20px "Open Sans", "Noto Sans", sans-serif;
}
.vm-status svg { width: 20px; height: 20px; }
```
